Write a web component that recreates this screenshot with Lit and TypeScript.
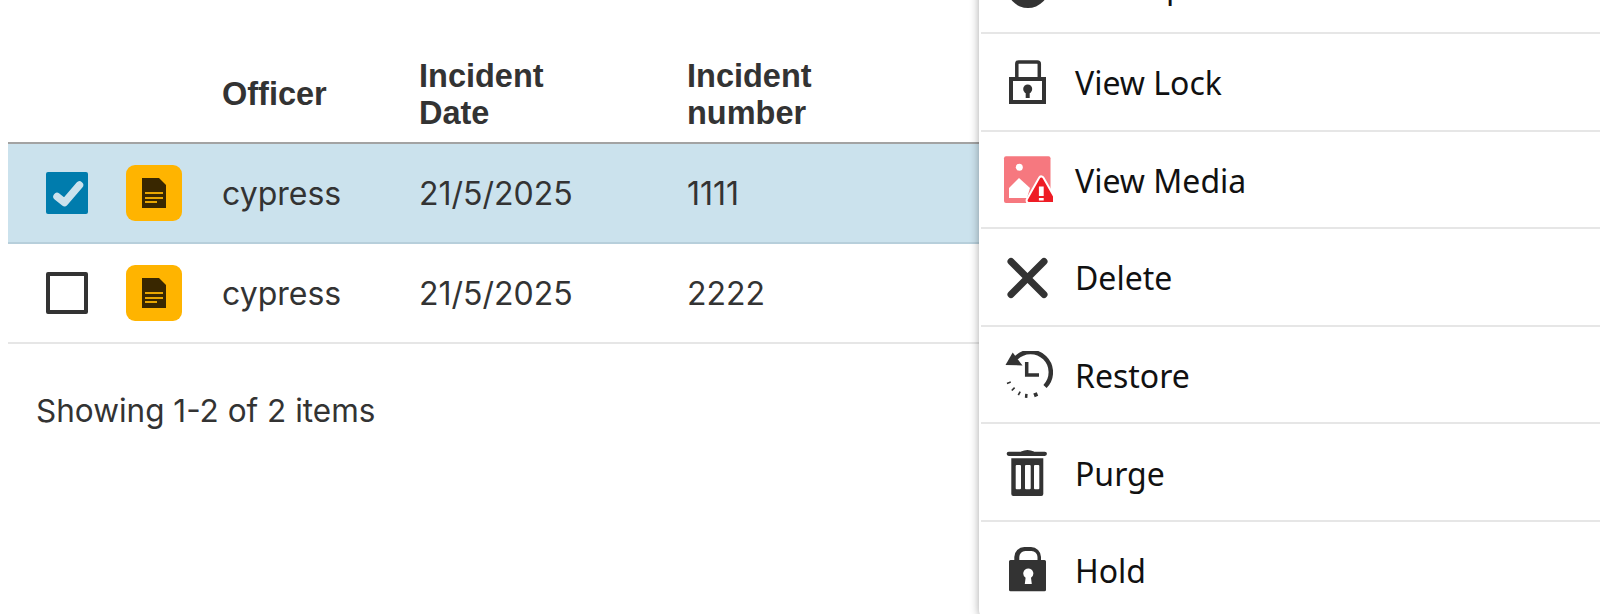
import { LitElement, css, html, svg } from "lit";
import { customElement } from "lit/decorators.js";

const rows = [
  { selected: true, officer: "cypress", date: "21/5/2025", number: "1111" },
  { selected: false, officer: "cypress", date: "21/5/2025", number: "2222" },
];

const icons = {
  backup: svg`<circle cx="25" cy="27" r="21" fill="#333"/>`,
  viewLock: svg`<path fill="none" stroke="#333" stroke-width="3.500" d="M13.800 19V6a2 2 0 0 1 2-2h18.500a2 2 0 0 1 2 2v13"/>
    <rect x="8" y="21" width="33" height="23" fill="none" stroke="#333" stroke-width="4"/>
    <circle cx="24.700" cy="31" r="4.500" fill="#333"/>
    <rect x="22.700" y="32" width="4" height="8" fill="#333"/>`,
  viewMedia: svg`<rect x="1" y="1.300" width="46.500" height="46.700" rx="2" fill="#f6787f"/>
    <circle cx="16.300" cy="12.300" r="3.500" fill="#fff"/>
    <path fill="#fff" d="M6 43V33l10-10 11 10-3 10z"/>
    <path fill="#fff" stroke="#fff" stroke-width="7" stroke-linejoin="round" d="M38.300 24l12.200 21.500H26.100z"/>
    <path fill="#ee1c25" stroke="#ee1c25" stroke-width="3" stroke-linejoin="round" d="M38.300 24l12.200 21.500H26.100z"/>
    <rect x="35.900" y="31.500" width="4.800" height="9.500" fill="#fff"/>
    <rect x="35.900" y="43" width="4.800" height="2.500" fill="#fff"/>`,
  delete: svg`<path fill="none" stroke="#333" stroke-width="7" stroke-linecap="round" d="M8 8.500l33 33M41 8.500l-33 33"/>`,
  restore: svg`<path fill="none" stroke="#333" stroke-width="4.500" d="M13 7A20.300 20.300 0 1 1 42 35.500"/>
    <path fill="#333" d="M2.500 14L9.700 1.500 19.500 14.500z"/>
    <path fill="none" stroke="#333" stroke-width="3.500" d="M23.700 11v13H36"/>
    <path fill="none" stroke="#333" stroke-width="4" d="M5.600 31l.5 1.500M9.600 37.500l1.200 1.200M15.500 42l1.500.8M22 44.800l2.500.2M31 44.300l3.500-1.300"/>`,
  purge: svg`<path fill="#333" fill-rule="evenodd" d="M18 3.500q6.500-3 13 0v.2h10.800a2.100 2.100 0 0 1 0 4.300H5.800a2.100 2.100 0 0 1 0-4.300H18zM8.300 10.300h32V46a2 2 0 0 1-2 2h-28a2 2 0 0 1-2-2zM13.700 17a1 1 0 0 0-1 1v22.300a1 1 0 0 0 1 1H17a1 1 0 0 0 1-1V18a1 1 0 0 0-1-1zM23 17a1 1 0 0 0-1 1v22.300a1 1 0 0 0 1 1h3.700a1 1 0 0 0 1-1V18a1 1 0 0 0-1-1zM32 17a1 1 0 0 0-1 1v22.300a1 1 0 0 0 1 1h3.300a1 1 0 0 0 1-1V18a1 1 0 0 0-1-1z"/>`,
  hold: svg`<path fill="#333" fill-rule="evenodd" d="M11.300 14V11A10 10 0 0 1 21.300 1h6.700a10 10 0 0 1 10 10v3h3.500a1.500 1.500 0 0 1 1.500 1.500v28.200a1.500 1.500 0 0 1-1.500 1.500h-34A1.500 1.500 0 0 1 6 43.700V15.500A1.500 1.500 0 0 1 7.500 14zM16.300 14h18.200v-3a6 6 0 0 0-6-6h-6.200a6 6 0 0 0-6 6zM25.300 22.500a5 5 0 0 0-2.700 9.200L21.800 38h7l-.8-6.300a5 5 0 0 0-2.700-9.200z"/>`,
};

const menu = [
  { label: "Backup", icon: icons.backup },
  { label: "View Lock", icon: icons.viewLock },
  { label: "View Media", icon: icons.viewMedia },
  { label: "Delete", icon: icons.delete },
  { label: "Restore", icon: icons.restore },
  { label: "Purge", icon: icons.purge },
  { label: "Hold", icon: icons.hold },
];

@customElement("app-root")
export class AppRoot extends LitElement {
  static styles = css`
    :host {
      display: block;
      position: relative;
      height: 614px;
      overflow: hidden;
      background: #fff;
      color: #333;
      font-family: Inter, "Liberation Sans", sans-serif;
    }

    .grid {
      margin: 53px 0 0 8px;
      width: 1592px;
    }

    .head,
    .row {
      display: grid;
      grid-template-columns: 214px 197px 268px 1fr;
      align-items: center;
    }

    .head {
      height: 83px;
      padding-bottom: 6px;
      border-bottom: 2px solid #a3a3a3;
      font: bold 32.500px/37px "Liberation Sans", sans-serif;
      color: #333;
    }

    .row {
      height: 98px;
      border-bottom: 2px solid #e6e6e6;
      font-size: 32px;
    }

    .row.selected {
      background: #cbe2ed;
      border-bottom-color: #b7cfdb;
    }

    .lead {
      display: flex;
      align-items: center;
      gap: 38px;
      padding-left: 38px;
    }

    .check {
      width: 42px;
      height: 42px;
      box-sizing: border-box;
      border: 4px solid #333;
      border-radius: 2px;
      background: #fff;
    }

    .check.on {
      border: none;
      background: #007cad;
    }

    .check svg,
    .tile svg,
    .item svg {
      display: block;
      flex: none;
    }

    .tile {
      width: 56px;
      height: 56px;
      border-radius: 9px;
      background: #ffb400;
      display: grid;
      place-items: center;
    }

    .footer {
      padding: 47px 0 0 28px;
      font-size: 31.500px;
      color: #333;
    }

    .menu {
      position: absolute;
      left: 979px;
      top: -63.600px;
      width: 640px;
      border-radius: 10px;
      background: #fff;
      box-shadow: 0 0 10px rgba(0, 0, 0, 0.35);
      padding-left: 2px;
      box-sizing: border-box;
    }

    .item {
      height: 93.600px;
      padding-top: 2px;
      display: flex;
      align-items: center;
      gap: 22px;
      padding-left: 22px;
      border-bottom: 2px solid #e6e6e6;
      font-family: "Noto Sans", sans-serif;
      font-size: 32px;
      color: #111;
    }
  `;

  render() {
    return html`
      <div class="grid">
        <div class="head">
          <div></div>
          <div>Officer</div>
          <div>Incident<br />Date</div>
          <div>Incident<br />number</div>
        </div>
        ${rows.map(
          (r) => html`
            <div class="row ${r.selected ? "selected" : ""}">
              <div class="lead">
                <div class="check ${r.selected ? "on" : ""}">
                  ${r.selected
                    ? html`<svg width="42" height="42" viewBox="0 0 42 42">
                        <path fill="none" stroke="#cbe2ed" stroke-width="7.500" stroke-linecap="round" stroke-linejoin="round" d="M11 24.500l7.500 6L33.500 13"/>
                      </svg>`
                    : ""}
                </div>
                <div class="tile">
                  <svg width="26" height="32" viewBox="0 0 26 32">
                    <path fill="#392700" d="M1 1h17l7 7v23H1z"/>
                    <path stroke="#e9a600" stroke-width="2" d="M4 16h18M4 21h18M4 25h12"/>
                  </svg>
                </div>
              </div>
              <div>${r.officer}</div>
              <div>${r.date}</div>
              <div>${r.number}</div>
            </div>
          `
        )}
        <div class="footer">Showing 1-2 of 2 items</div>
      </div>
      <div class="menu">
        ${menu.map(
          (m) => html`
            <div class="item">
              <svg width="50" height="50" viewBox="0 0 50 50">${m.icon}</svg>
              <span>${m.label}</span>
            </div>
          `
        )}
      </div>
    `;
  }
}
